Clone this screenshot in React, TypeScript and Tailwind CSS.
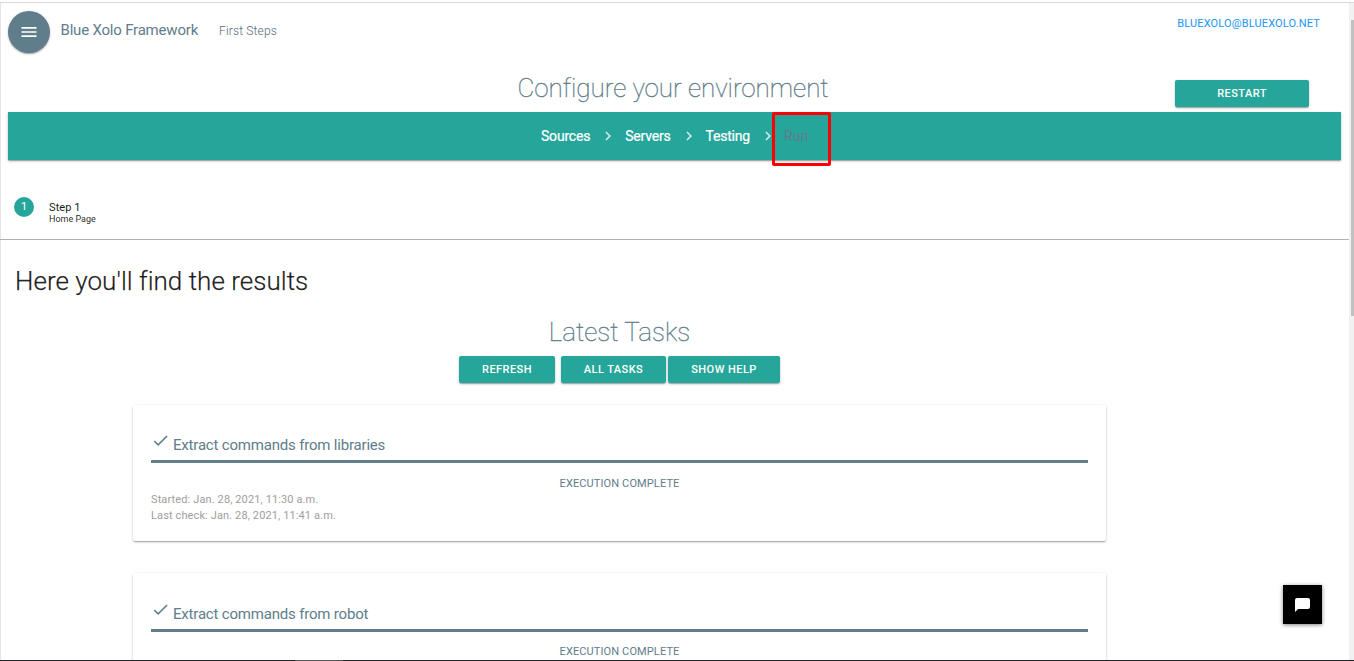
import { Fragment } from 'react';
import { MdCheck, MdChevronRight, MdMenu } from 'react-icons/md';

const RAISED =
  'shadow-[0_1px_1px_0_rgba(0,0,0,0.14),0_2px_1px_-1px_rgba(0,0,0,0.12),0_1px_3px_0_rgba(0,0,0,0.2)]';

const steps = ['Sources', 'Servers', 'Testing'];

type Task = { name: string; started?: string; checked?: string };

const tasks: Task[] = [
  { name: 'Extract commands from libraries', started: 'Jan. 28, 2021, 11:30 a.m.', checked: 'Jan. 28, 2021, 11:41 a.m.' },
  { name: 'Extract commands from robot' },
];

function Button({ label, size }: { label: string; size: string }) {
  return (
    <button
      className={`${size} ${RAISED} h-[27px] shrink-0 rounded-[2px] bg-[#26a69a] text-[11px] leading-[26px] font-medium tracking-[0.45px] text-white`}
    >
      {label}
    </button>
  );
}

function Header() {
  return (
    <header className="flex h-[66px] shrink-0 items-start pl-2">
      <button
        aria-label="Menu"
        className={`mt-2 flex size-[42px] items-center justify-center rounded-full bg-[#607d8b] text-white ${RAISED}`}
      >
        <MdMenu size={20} />
      </button>
      <span className="mt-[15px] ml-[10.5px] text-[15px] leading-[24px] tracking-[-0.2px] text-[#607d8b]">
        Blue Xolo Framework
      </span>
      <span className="mt-[16px] ml-[21px] text-[12px] leading-[24px] font-light tracking-[0.15px] text-[#506d7b]">
        First Steps
      </span>
      <a className="mt-[13px] mr-[29px] ml-auto text-[11px] leading-[16px] tracking-[0.15px] text-[#2196f3]">
        BLUEXOLO@BLUEXOLO.NET
      </a>
    </header>
  );
}

function Breadcrumb() {
  return (
    <nav
      className={`mr-2 ml-2 flex h-12 shrink-0 items-center bg-[#26a69a] pl-[533px] text-[14px] tracking-[-0.2px] text-white ${RAISED}`}
    >
      {steps.map((step) => (
        <Fragment key={step}>
          <span className="[-webkit-text-stroke:0.2px]">{step}</span>
          <MdChevronRight size={18} className="mr-[8px] ml-[9px] shrink-0 text-white/80" />
        </Fragment>
      ))}
      <span className="relative -ml-px font-normal tracking-normal text-[#607d8b]">
        Run
        <span className="absolute -top-[14px] -left-[12px] h-[54px] w-[59px] rounded-[2px] border-3 border-[#ff0000]" />
      </span>
    </nav>
  );
}

function TaskCard({ task }: { task: Task }) {
  return (
    <article className={`h-[136px] shrink-0 rounded-[2px] bg-white px-[18px] pt-[28.4px] ${RAISED}`}>
      <div className="flex h-[30px] border-b-3 border-[#607d8b] text-[#607d8b]">
        <MdCheck size={19} className="-mt-[2px] shrink-0" />
        <h3 className="ml-[3px] text-[15px] leading-[24px] tracking-[-0.19px]">{task.name}</h3>
      </div>
      <p className="mt-[12.7px] text-center text-[11px] leading-[16px] tracking-[0.12px] text-[#607d8b]">
        EXECUTION COMPLETE
      </p>
      <div className="text-[11px] leading-[16px] tracking-[0.12px] text-[#9e9e9e]">
        {task.started && <p>Started: {task.started}</p>}
        {task.checked && <p>Last check: {task.checked}</p>}
      </div>
    </article>
  );
}

export default function App() {
  return (
    <div className="relative flex h-[661px] w-[1354px] flex-col overflow-hidden bg-white font-['Roboto',sans-serif]">
      <div className="h-[3px] shrink-0 border-b border-[#dadada]" />
      <div className="flex min-h-0 flex-1">
        <div className="w-px shrink-0 bg-[#e6e6e6]" />
        <main className="-ml-px flex w-[1349px] shrink-0 flex-col overflow-hidden">
          <Header />
          <div className="flex h-[43px] shrink-0 items-start">
            <h1 className="mt-px ml-[517.5px] text-[26px] leading-[36px] font-thin tracking-[-0.03px] text-[#607d8b] [-webkit-text-stroke:0.35px]">
              Configure your environment
            </h1>
            <div className="mt-[11px] mr-[40px] ml-auto flex">
              <Button label="RESTART" size="w-[134px]" />
            </div>
          </div>
          <Breadcrumb />
          <section className="flex h-[80px] shrink-0 border-b border-[#b0b0b0] pt-[37px] pl-[14px]">
            <span className="flex size-5 items-center justify-center rounded-full bg-[#26a69a] text-[11px] text-white">
              1
            </span>
            <div className="mt-[4px] ml-[15px]">
              <p className="text-[11px] leading-[13px] tracking-[0.1px] text-black/87 [-webkit-text-stroke:0.1px]">Step 1</p>
              <p className="text-[9px] leading-[10px] text-black/87">Home Page</p>
            </div>
          </section>
          <h2 className="mt-[23px] ml-[15px] shrink-0 text-[26px] leading-[36px] font-light tracking-[0.03px] text-black/87 [-webkit-text-stroke:0.25px]">
            Here you'll find the results
          </h2>
          <section className="ml-[133px] flex w-[973px] flex-col">
            <h2 className="mt-[15px] text-center text-[26px] leading-[36px] font-thin text-[#607d8b] [-webkit-text-stroke:0.35px]">
              Latest Tasks
            </h2>
            <div className="mt-[6px] flex justify-center">
              <Button label="REFRESH" size="mr-[6px] w-[96px]" />
              <Button label="ALL TASKS" size="mr-[2px] w-[105px]" />
              <Button label="SHOW HELP" size="w-[112px]" />
            </div>
            <div className="mt-[22px] flex flex-col gap-[32.3px]">
              {tasks.map((task) => (
                <TaskCard key={task.name} task={task} />
              ))}
            </div>
          </section>
        </main>
        <div className="flex w-[5px] shrink-0 flex-col bg-[#f1f1f1] pt-[17px] pl-[2px]">
          <div className="h-[296px] bg-[#c1c1c1]" />
        </div>
      </div>
      <div className="flex h-px shrink-0 bg-[#202124] pl-[295px]">
        <div className="w-[48px] bg-[#555]" />
      </div>
      <button
        aria-label="Chat"
        className="absolute top-[585px] left-[1283px] flex size-[39px] items-center justify-center bg-black text-white shadow-[0_1px_4px_rgba(0,0,0,0.5)]"
      >
        <svg width="15" height="14" viewBox="0 0 15 14" fill="currentColor">
          <path d="M2 0h11a2 2 0 0 1 2 2v7a2 2 0 0 1-2 2H3L0 14V2a2 2 0 0 1 2-2z" />
        </svg>
      </button>
    </div>
  );
}
